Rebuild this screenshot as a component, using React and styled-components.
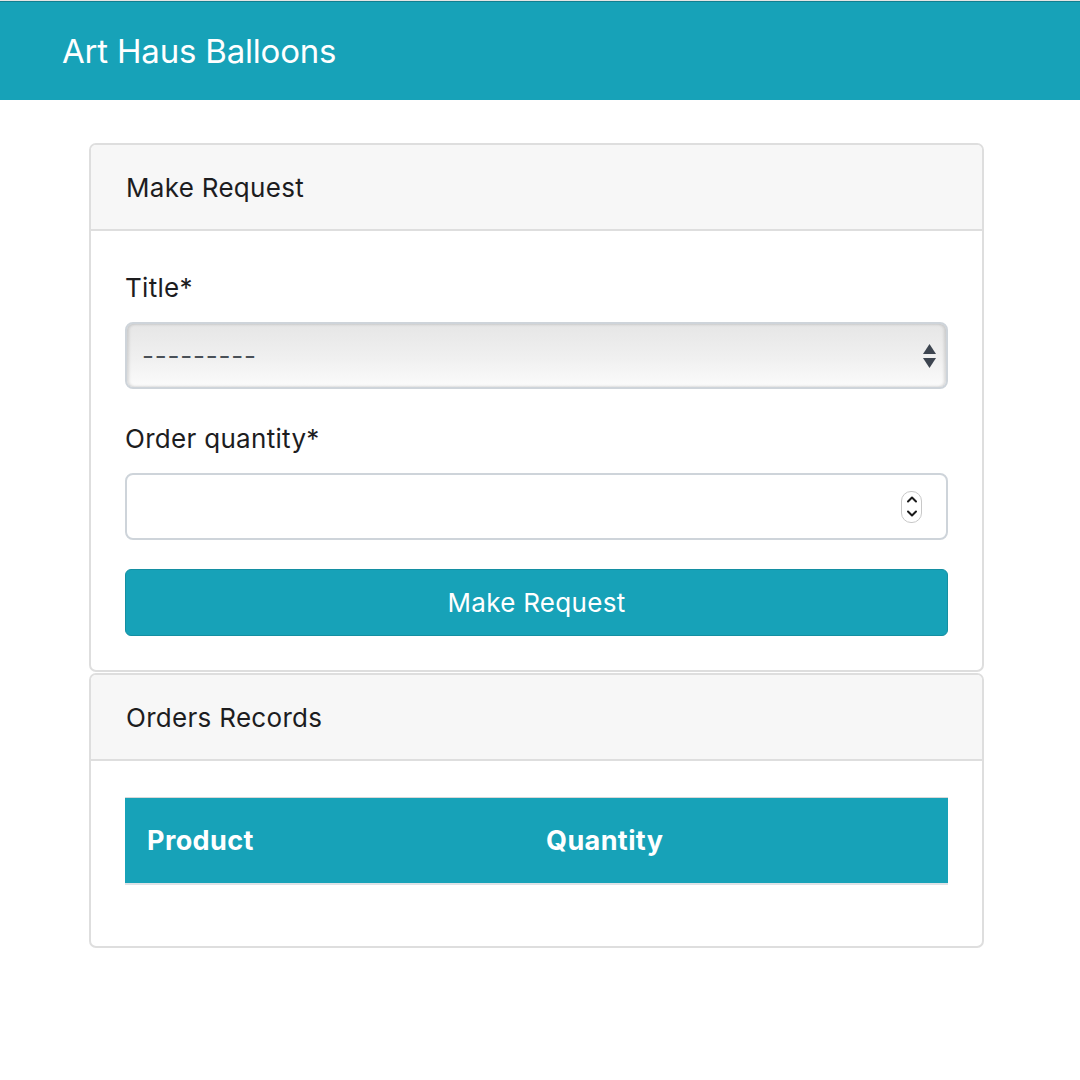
import React from "react";
import styled, { createGlobalStyle } from "styled-components";

const Global = createGlobalStyle`
  html, body { margin: 0; padding: 0; background: #ffffff; }
  body { font-family: Inter, "Helvetica Neue", Arial, sans-serif; color: #212529; }
  * { box-sizing: border-box; }
`;

const TopStrip = styled.div`
  height: 1px;
  background: #e4e4e4;
`;

const NavBar = styled.header`
  height: 99px;
  background: #17a2b8;
  border-top: 1px solid #127f90;
  display: flex;
  align-items: center;
  padding-left: 62px;
`;

const Brand = styled.div`
  color: #ffffff;
  font-size: 33px;
  font-weight: 400;
  letter-spacing: -0.2px;
`;

const Main = styled.main`
  width: 895px;
  margin: 43px 0 0 89px;
  display: flex;
  flex-direction: column;
  gap: 1px;
`;

const Card = styled.section`
  border: 2px solid #dedede;
  border-radius: 7px;
  overflow: hidden;
  background: #fff;
`;

const CardHeader = styled.div`
  height: 86px;
  background: #f7f7f7;
  border-bottom: 2px solid #dedede;
  display: flex;
  align-items: center;
  padding: 0 35px;
  font-size: 26px;
  letter-spacing: 0.3px;
  color: #1d1d1f;
`;

const CardBody = styled.div`
  padding: ${(p) => p.$pad};
  display: flex;
  flex-direction: column;
`;

const Label = styled.label`
  font-size: 26px;
  letter-spacing: 0.3px;
  line-height: 36px;
  color: #1d1d1f;
  margin-bottom: 16px;
`;

const FieldBox = styled.div`
  height: 67px;
  border-radius: 8px;
  border: 2px solid #ced4da;
  display: flex;
  align-items: center;
  padding: 0 9px 0 15px;
  margin-bottom: ${(p) => p.$mb}px;
  background: ${(p) =>
    p.$select ? "linear-gradient(to bottom, #e6e6e6 0%, #f0f0f0 55%, #fbfbfb 100%)" : "#fff"};
  box-shadow: ${(p) =>
    p.$select ? "inset 2px 0 3px rgba(0,0,0,0.12), inset -2px 0 3px rgba(0,0,0,0.12)" : "none"};
`;

const FieldText = styled.span`
  flex: 1;
  font-size: 26px;
  color: #495057;
  letter-spacing: 0.8px;
`;

const Button = styled.button`
  height: 67px;
  border: 1px solid #148fa2;
  border-radius: 6px;
  background: #17a2b8;
  color: #ffffff;
  font-family: inherit;
  font-size: 26px;
  letter-spacing: 0.3px;
  cursor: pointer;
`;

const Table = styled.div`
  border-top: 1px solid #d8d8d8;
  border-bottom: 2px solid #dee2e6;
  background: #17a2b8;
  height: 88px;
  display: grid;
  grid-template-columns: 399px 1fr;
  align-items: center;
`;

const Th = styled.div`
  color: #ffffff;
  font-weight: 700;
  font-size: 27px;
  letter-spacing: 0.4px;
  padding-left: 22px;
`;

const Spinner = styled.div`
  width: 21px;
  height: 32px;
  border: 1px solid #c8c8c8;
  border-radius: 10px;
  display: flex;
  flex-direction: column;
  align-items: center;
  justify-content: space-around;
  margin-right: 15px;
`;

const SelectArrows = () => (
  <svg width="15" height="26" viewBox="0 0 15 26">
    <path d="M7.5 1 L14 11 L1 11 Z" fill="#3d4550" />
    <path d="M1 15 L14 15 L7.5 25 Z" fill="#3d4550" />
  </svg>
);

const Chevron = ({ up }) => (
  <svg width="12" height="8" viewBox="0 0 12 8">
    <path
      d={up ? "M2 6.5 L6 2.5 L10 6.5" : "M2 1.5 L6 5.5 L10 1.5"}
      fill="none"
      stroke="#1a1a1a"
      strokeWidth="2"
      strokeLinecap="round"
      strokeLinejoin="round"
    />
  </svg>
);

export default function App() {
  return (
    <>
      <Global />
      <TopStrip />
      <NavBar>
        <Brand>Art Haus Balloons</Brand>
      </NavBar>
      <Main>
        <Card>
          <CardHeader>Make Request</CardHeader>
          <CardBody $pad="39px 34px 34px">
            <Label>Title*</Label>
            <FieldBox $select $mb={32}>
              <FieldText>---------</FieldText>
              <SelectArrows />
            </FieldBox>
            <Label>Order quantity*</Label>
            <FieldBox $mb={29}>
              <FieldText />
              <Spinner>
                <Chevron up />
                <Chevron />
              </Spinner>
            </FieldBox>
            <Button>Make Request</Button>
          </CardBody>
        </Card>
        <Card>
          <CardHeader>Orders Records</CardHeader>
          <CardBody $pad="36px 34px 61px">
            <Table>
              <Th>Product</Th>
              <Th>Quantity</Th>
            </Table>
          </CardBody>
        </Card>
      </Main>
    </>
  );
}
